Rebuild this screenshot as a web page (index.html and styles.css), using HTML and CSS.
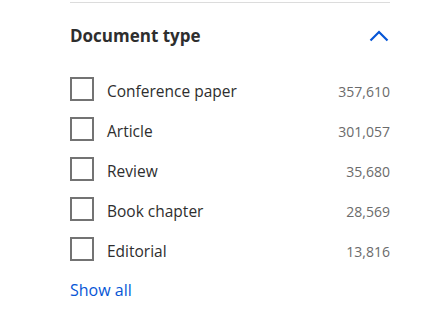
FILE: index.html
```html
<!DOCTYPE html>
<html>
<head>
<meta charset="utf-8">
<link rel="stylesheet" href="styles.css">
</head>
<body>
<section class="facet">
  <div class="facet-head">
    <h3 class="facet-title">Document type</h3>
    <svg class="chevron" width="20" height="12" viewBox="0 0 20 12"><path d="M1.5 10.5 L10 2 L18.5 10.5" fill="none" stroke="#0656d6" stroke-width="2.2"/></svg>
  </div>
  <ul class="options">
    <li class="option"><span class="box"></span><span class="label">Conference paper</span><span class="count">357,610</span></li>
    <li class="option"><span class="box"></span><span class="label">Article</span><span class="count">301,057</span></li>
    <li class="option"><span class="box"></span><span class="label">Review</span><span class="count">35,680</span></li>
    <li class="option"><span class="box"></span><span class="label">Book chapter</span><span class="count">28,569</span></li>
    <li class="option"><span class="box"></span><span class="label">Editorial</span><span class="count">13,816</span></li>
  </ul>
  <a class="show-all" href="#">Show all</a>
</section>
</body>
</html>
```
FILE: styles.css
```css
html, body { margin: 0; padding: 0; background: #fff; }
body { font-family: "Open Sans", "Noto Sans", sans-serif; color: #2e2e2e; }
.facet { width: 320px; margin-left: 70px; padding-top: 2px; }
.facet::before { content: ""; display: block; height: 1px; background: #dcdcdc; }
.facet-head { display: flex; align-items: center; justify-content: space-between; height: 68px; }
.facet-title { margin: 0 0 4px; font-size: 17px; font-weight: 700; color: #2e2e2e; }
.chevron { margin: 0 1px 2px 0; }
.options { list-style: none; margin: 0; padding: 0; }
.option { display: flex; align-items: center; height: 40px; }
.box { width: 20px; height: 20px; border: 2px solid #737373; flex: none; margin: 0 13px 5px 0; }
.label { flex: 1; font-size: 15.5px; color: #2e2e2e; }
.count { font-size: 14px; color: #6b6b6b; }
.show-all { display: inline-block; margin-top: 8px; font-size: 16px; color: #0656d6; text-decoration: none; }
```
